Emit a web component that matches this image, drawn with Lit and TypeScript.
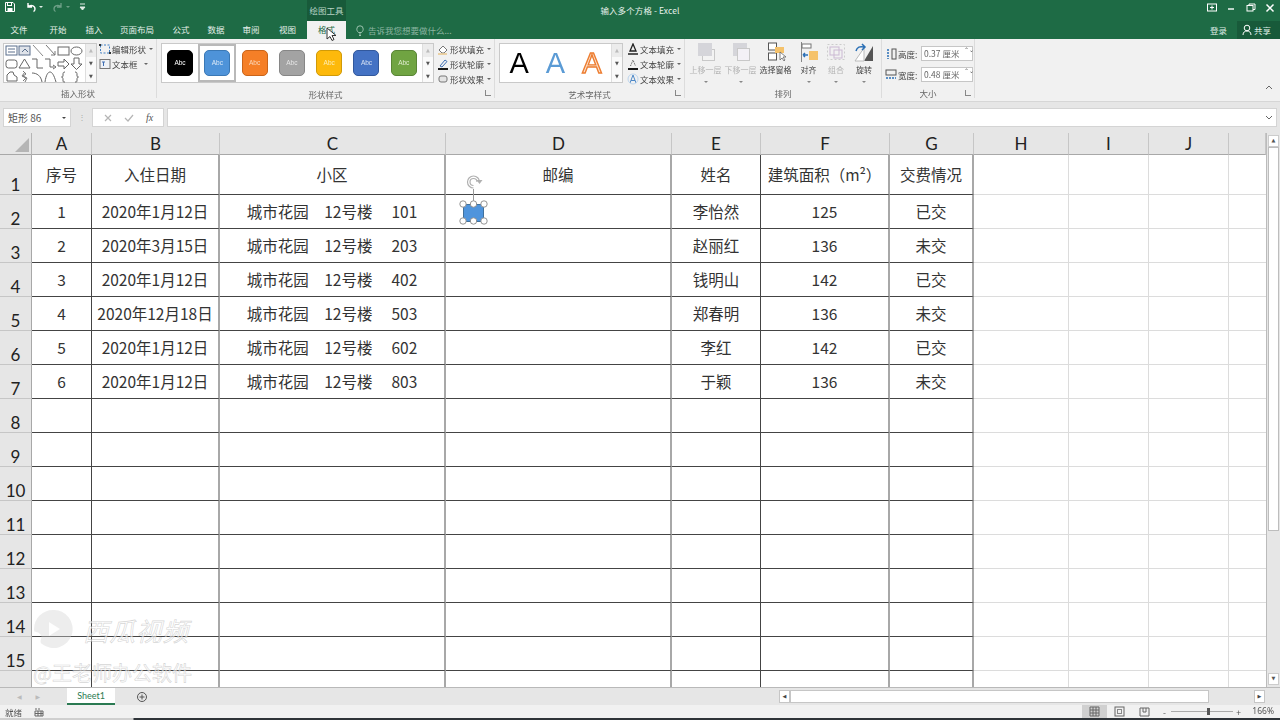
import { LitElement, css, html, svg } from 'lit';
import { customElement } from 'lit/decorators.js';

const TABS: [string, number][] = [
	['文件', 38], ['开始', 40], ['插入', 32], ['页面布局', 54], ['公式', 34],
	['数据', 36], ['审阅', 34], ['视图', 39],
];

const SWATCHES = [
	['#000000', '#000000', '#fff'], ['#4e93d9', '#3a78b5', '#dbe9f7'], ['#f57f27', '#c9641a', '#fbd9bd'],
	['#a3a3a3', '#868686', '#e6e6e6'], ['#fdb90b', '#d09a08', '#fdeeb5'], ['#4472c4', '#32589c', '#d7e1f3'],
	['#70a442', '#598535', '#dfeccf'],
];

const COLS = [
	{ name: 'A', w: 60, edge: 'dark' }, { name: 'B', w: 128, edge: 'gray' }, { name: 'C', w: 226, edge: 'gray' },
	{ name: 'D', w: 226, edge: 'gray' }, { name: 'E', w: 89, edge: 'dark' }, { name: 'F', w: 129, edge: 'gray' },
	{ name: 'G', w: 84, edge: 'gray' }, { name: 'H', w: 95, edge: 'light' }, { name: 'I', w: 80, edge: 'light' },
	{ name: 'J', w: 80, edge: 'light' }, { name: '', w: 37, edge: 'none' },
];

const ROWS = [
	['序号', '入住日期', '小区', '邮编', '姓名', '建筑面积（m²）', '交费情况'],
	['1', '2020年1月12日', '城市花园　12号楼　 101', '', '李怡然', '125', '已交'],
	['2', '2020年3月15日', '城市花园　12号楼　 203', '', '赵丽红', '136', '未交'],
	['3', '2020年1月12日', '城市花园　12号楼　 402', '', '钱明山', '142', '已交'],
	['4', '2020年12月18日', '城市花园　12号楼　 503', '', '郑春明', '136', '未交'],
	['5', '2020年1月12日', '城市花园　12号楼　 602', '', '李红', '142', '已交'],
	['6', '2020年1月12日', '城市花园　12号楼　 803', '', '于颖', '136', '未交'],
];

const ic = (w: number, h: number, body: unknown) =>
	html`<svg width=${w} height=${h} viewBox="0 0 ${w} ${h}" fill="none">${body}</svg>`;

// the little outlines in the insert-shape gallery, three rows of six
const SHAPES = [
	svg`<rect x="1" y="2" width="11" height="9" stroke="#5a6f8c"/><path d="M3 5h7M3 8h7" stroke="#5a6f8c"/>`,
	svg`<rect x="1" y="2" width="11" height="9" fill="#dfe3ea" stroke="#5a6f8c"/><path d="M4 8l3-3 3 3" stroke="#5a6f8c"/>`,
	svg`<path d="M2 1l10 11" stroke="#8a8a8a"/>`,
	svg`<path d="M2 1l9 10M11 7v4H7" stroke="#777"/>`,
	svg`<rect x="1" y="3" width="11" height="8" stroke="#666"/>`,
	svg`<ellipse cx="6.5" cy="7" rx="5.5" ry="4" stroke="#666"/>`,
	svg`<rect x="1" y="3" width="11" height="8" rx="2.5" stroke="#666"/>`,
	svg`<path d="M6.5 2L12 11H1z" stroke="#666"/>`,
	svg`<path d="M1 2h5v9h6" stroke="#666"/>`,
	svg`<path d="M1 2h5v8h4M9 8l3 2-3 2" stroke="#666"/>`,
	svg`<path d="M1 5h6V2l5 5-5 5V9H1z" stroke="#666"/>`,
	svg`<path d="M4 1h5v6h3l-5.500 5.500L1 7h3z" stroke="#666"/>`,
	svg`<path d="M2 11V5l3-3h3l1 3 3 2v4z" stroke="#666"/>`,
	svg`<path d="M5 1l3 3-3 2 4 2-2 4M7 2L4 6l4 2-3 3" stroke="#777"/>`,
	svg`<path d="M1 3c5 0 9 3 10 9" stroke="#666"/>`,
	svg`<path d="M1 12C2 5 4 2 6 2s4 3 6 10" stroke="#666"/>`,
	svg`<path d="M8 2C6 2 6 3 6 5S6 6.500 4.500 7C6 7.500 6 8 6 10s0 2 2 2" stroke="#666"/>`,
	svg`<path d="M5 2c2 0 2 1 2 3s0 1.500 1.500 2C7 7.500 7 8 7 10s0 2-2 2" stroke="#666"/>`,
];

@customElement('app-root')
export class AppRoot extends LitElement {

	static styles = css`
		:host {
			width: 1280px;
			height: 720px;
			overflow: hidden;
			position: relative;
			display: flex;
			flex-direction: column;
			font-family: "Noto Sans CJK SC", "Noto Sans", sans-serif;
			background: #f1f1f1;
			color: #444;
		}
		.titlebar { height: 39px; background: #1e6b45; color: #e4efe9; flex: none; }
		.toprow { height: 21px; display: grid; grid-template-columns: 1fr auto 1fr; }
		.left { display: flex; align-items: center; }
		.qat { width: 307px; display: flex; align-items: flex-start; gap: 9px; padding: 1px 0 0 4px; height: 21px; box-sizing: border-box; }
		.qat .faded { opacity: .35; }
		.qat .drop { display: flex; align-items: center; }
		.context { width: 39px; height: 21px; background: #185a3a; font-size: 8.5px; text-align: center; line-height: 21px; color: #b7d2c4; }
		.title { font-size: 8.5px; line-height: 20px; letter-spacing: .1px; color: #e6f0ea; }
		.winbtns { display: flex; justify-content: flex-end; align-items: flex-start; gap: 9.500px; padding: 3px 5px 0 0; }
		.tabrow { height: 18px; display: flex; align-items: stretch; font-size: 8.500px; }
		.tab { text-align: center; line-height: 16px; }
		.tab.on { width: 39px; background: #f1f1f1; color: #1e6b45; }
		.tell { margin-left: 10px; display: flex; align-items: center; gap: 4px; color: #8db5a1; font-size: 8.5px; }
		.account { margin-left: auto; display: flex; align-items: stretch; }
		.login { line-height: 18px; margin-right: 10px; color: #dfece5; }
		.share { width: 43px; background: #185a3a; display: flex; align-items: center; gap: 2px; padding-left: 5px; box-sizing: border-box; color: #dfece5; }

		.ribbon { height: 63px; flex: none; display: flex; background: #f1f1f1; border-bottom: 1px solid #d6d6d6; box-sizing: border-box; filter: blur(.3px); position: relative; }
		.group { position: relative; display: flex; flex-direction: column; border-right: 1px solid #dcdcdc; box-sizing: border-box; margin-bottom: 3px; }
		.gbody { flex: 1; display: flex; align-items: flex-start; padding-top: 4px; }
		.glabel { height: 14px; text-align: center; font-size: 8.5px; line-height: 18px; color: #666; }
		.launch { position: absolute; right: 3px; bottom: 2px; width: 5px; height: 5px; border-left: 1px solid #888; border-bottom: 1px solid #888; }
		.gallery { display: flex; background: #fff; border: 1px solid #c9c9c9; height: 40px; box-sizing: border-box; }
		.shapes { display: grid; grid-template-columns: repeat(6, 13px); grid-auto-rows: 13px; padding-left: 1px; width: 80px; }
		.spin { width: 10px; display: flex; flex-direction: column; background: #fafafa; border-left: 1px solid #dedede; color: #555; }
		.spin span { flex: 1; font-size: 5px; text-align: center; line-height: 13px; font-family: "DejaVu Sans", sans-serif; }
		.spin span:first-child { color: #bbb; background: #ececec; }
		.cmds { display: flex; flex-direction: column; font-size: 8.5px; height: 43px; margin-top: -1px; justify-content: space-between; color: #444; white-space: nowrap; }
		.cmds.two { height: 28px; }
		.cmd { display: flex; align-items: center; gap: 1px; height: 13px; }
		.caret { width: 0; height: 0; border: 2px solid transparent; border-top: 2.500px solid #666; border-bottom: 0; margin-left: 2px; }

		.styles { display: flex; align-items: center; width: 260px; padding-left: 5px; gap: 11.300px; box-sizing: border-box; }
		.sw { width: 26px; height: 26px; border-radius: 5px; border: 1px solid; box-sizing: border-box; font-size: 6.5px; font-family: "Liberation Sans", sans-serif; text-align: center; line-height: 24px; flex: none; }
		.selbox { flex: none; width: 38px; height: 38px; margin: 0 -6px; border: 2px solid #b9b9b9; box-sizing: border-box; background: #fff; display: flex; align-items: center; justify-content: center; }
		.wa { display: flex; width: 111px; align-items: center; justify-content: space-around; padding: 0 1px; box-sizing: border-box; }
		.wa span { font-family: "Liberation Sans", sans-serif; font-size: 29px; line-height: 38px; }
		.a1 { color: #000; }
		.a2 { color: #5b9bd5; }
		.a3 { color: #fbe3cf; -webkit-text-stroke: 1.4px #ed7d31; }

		.arrange { display: flex; padding-left: 4px; align-items: flex-start; }
		.big { width: 33px; display: flex; flex-direction: column; align-items: center; font-size: 8px; color: #444; white-space: nowrap; gap: 2px; flex: none; }
		.big.off { color: #b4b4b4; }
		.big .caret { margin: 4px 0 0; border-top-color: #888; }
		.big.narrow { width: 28px; }
		.big.pushed { margin-left: 2px; }
		.big.tucked { margin-left: -3px; }
		.sizer { font-size: 8.5px; display: flex; flex-direction: column; gap: 6px; padding: 7px 0 0 3px; white-space: nowrap; }
		.srow { display: flex; align-items: center; gap: 1px; height: 15px; }
		.srow .lbl { flex: none; width: 20px; }
		.num { flex: none; width: 52px; height: 15px; box-sizing: border-box; background: #fff; border: 1px solid #c6c6c6; padding-left: 2px; line-height: 13px; color: #666; position: relative; margin-left: 2px; font-size: 8.5px; }
		.num::after { content: '⌃⌄'; position: absolute; right: 3px; top: 0; font-size: 6px; line-height: 6px; width: 5px; color: #555; font-family: "DejaVu Sans", sans-serif; }
		.collapse { position: absolute; right: 7px; bottom: 6px; }

		.fbar { flex: none; height: 31px; background: #e6e6e6; padding: 6px 3px; box-sizing: border-box; display: flex; align-items: stretch; font-size: 10px; }
		.namebox { width: 68px; background: #fff; border: 1px solid #d4d4d4; box-sizing: border-box; display: flex; align-items: center; justify-content: space-between; padding: 0 4px; color: #555; }
		.dots { width: 21px; text-align: center; color: #aaa; font-size: 8px; line-height: 17px; }
		.fbtns { width: 72px; background: #fff; border: 1px solid #d4d4d4; box-sizing: border-box; display: flex; align-items: center; justify-content: space-around; padding: 0 4px; }
		.fx { font-family: "Liberation Serif", serif; font-style: italic; font-size: 10px; color: #555; }
		.finput { flex: 1; margin-left: 3px; background: #fff; border: 1px solid #d4d4d4; display: flex; align-items: center; justify-content: flex-end; padding-right: 3px; }

		.work { flex: none; height: 554px; display: flex; position: relative; overflow: hidden; }
		.sheet { width: 1266px; overflow: hidden; background: #fff; }
		.table { display: grid; grid-template-rows: 22px 40px repeat(15, 34px); color: #333; font-size: 15.5px; }
		.corner { background: #e6e6e6; border-right: 1px solid #b5b5b5; border-bottom: 1px solid #a8a8a8; box-sizing: border-box; position: relative; }
		.corner::after { content: ''; position: absolute; right: 2px; bottom: 2px; border: 7px solid transparent; border-right-color: #b5b5b5; border-bottom-color: #b5b5b5; }
		.ch { background: #e6e6e6; border-right: 1px solid #c6c6c6; border-bottom: 1px solid #a8a8a8; box-sizing: border-box; text-align: center; font: 17px/22px Lato, sans-serif; color: #222; }
		.rh { background: #e6e6e6; border-right: 1px solid #a8a8a8; border-bottom: 1px solid #c6c6c6; box-sizing: border-box; text-align: center; font: 17px/1 Lato, sans-serif; color: #222; display: flex; align-items: flex-end; justify-content: center; padding-bottom: 1px; }
		.c { box-sizing: border-box; text-align: center; border-bottom: 1px solid #444; border-right: 1px solid #444; line-height: 33px; white-space: nowrap; overflow: hidden; }
		.c.gray { border-right: 2px solid #a8a8a8; }
		.c.light, .c.none { border-bottom: 1px solid #dcdcdc; }
		.c.light { border-right: 1px solid #dcdcdc; }
		.c.none { border-right: 0; }
		.c.head { line-height: 39px; }

		.shape { position: absolute; left: 457px; top: 42px; pointer-events: none; }
		.mark { position: absolute; left: 33px; top: 477px; pointer-events: none; color: rgba(255,255,255,.6); -webkit-text-stroke: .6px rgba(170,170,170,.5); }
		.mark .row1 { display: flex; align-items: center; gap: 10px; padding-left: 1px; }
		.mark .logo { flex: none; }
		.mark .brand { font-size: 25.500px; font-style: italic; letter-spacing: 1px; line-height: 36px; }
		.mark .row2 { font-size: 20px; line-height: 22px; margin-top: 13px; white-space: nowrap; overflow: visible; }

		.vscroll { width: 14px; background: #e6e6e6; border-left: 1px solid #bbb; box-sizing: border-box; padding: 2px 1px; display: flex; flex-direction: column; }
		.vscroll .btn { height: 10px; background: #fff; border: 1px solid #ccc; font-size: 5px; text-align: center; line-height: 9px; color: #555; font-family: "DejaVu Sans", sans-serif; }
		.thumb { height: 384px; background: #fff; border: 1px solid #bdbdbd; box-sizing: border-box; }
		.vscroll .grow { flex: 1; }

		.tabbar { flex: none; height: 18px; background: #e6e6e6; border-top: 1px solid #b9b9b9; box-sizing: border-box; display: flex; align-items: stretch; font-size: 8px; color: #bbb; }
		.nav { width: 67px; display: flex; justify-content: center; gap: 14px; align-items: center; font-family: "DejaVu Sans", sans-serif; font-size: 6px; box-sizing: border-box; padding-right: 10px; }
		.sheet1 { width: 48px; background: #fff; color: #2b7a52; font: 9px/15px Lato, sans-serif; text-align: center; border-bottom: 2px solid #2b7a52; box-sizing: border-box; }
		.plus { margin-left: 21px; display: flex; align-items: center; }
		.hs { margin-left: auto; display: flex; width: 501px; align-items: center; padding-right: 15px; box-sizing: border-box; }
		.hb { width: 11px; height: 13px; background: #fff; border: 1px solid #c6c6c6; box-sizing: border-box; color: #444; font-size: 5px; line-height: 11px; text-align: center; font-family: "DejaVu Sans", sans-serif; }
		.hthumb { width: 419px; height: 13px; background: #fff; border: 1px solid #c6c6c6; box-sizing: border-box; }
		.hgap { flex: 1; }

		.status { flex: none; height: 13px; background: #f1f1f1; font-size: 8.5px; display: flex; align-items: center; color: #555; filter: blur(.2px); }
		.status .ready { padding-left: 5px; width: 34px; box-sizing: border-box; }
		.views { margin-left: auto; display: flex; align-items: stretch; height: 13px; }
		.view { width: 25px; display: flex; justify-content: center; align-items: center; }
		.view.on { background: #d0d0d0; }
		.zoombar { width: 84px; margin-left: 3px; padding: 0 3px; box-sizing: border-box; position: relative; display: flex; align-items: center; justify-content: space-between; color: #555; }
		.zoombar::before { content: ''; position: absolute; left: 11px; right: 11px; top: 6px; height: 1px; background: #aaa; }
		.zoombar i { position: absolute; left: 47px; top: 3px; width: 3px; height: 7px; background: #555; }
		.pct { width: 36px; text-align: right; padding-right: 6px; box-sizing: border-box; font-family: "Noto Sans", sans-serif; font-size: 8.5px; }
		.edge { flex: none; height: 2px; background: linear-gradient(90deg, #cfcfcf 0, #cfcfcf 133px, #2e3338 134px); }
		.cursor { position: absolute; left: 326px; top: 27px; }
	`

	private sheetCells() {
		const out = [];
		for (let r = 0; r < 16; r++) {
			out.push(html`<div class="rh">${r < 15 ? r + 1 : ''}</div>`);
			COLS.forEach((col, i) => {
				const text = ROWS[r] ? ROWS[r][i] : '';
				const cls = `c ${col.edge}${r === 0 ? ' head' : ''}`;
				out.push(html`<div class=${cls}>${text ?? ''}</div>`);
			});
		}
		return out;
	}

	render() {
		const cols = `32px ${COLS.map((c) => `${c.w}px`).join(' ')}`;
		return html`
			<div class="titlebar">
				<div class="toprow">
					<div class="left">
						<div class="qat">
							${ic(12, 12, svg`<path d="M1.500 1.500h7.500l1.500 1.500v7.500h-9z" stroke="#fff"/><rect x="3.500" y="1.500" width="4" height="3" stroke="#fff"/><rect x="3.500" y="7" width="5" height="3.500" fill="#fff"/>`)}
							<span class="drop">${ic(12, 12, svg`<path d="M3 2v4h4M3 6c2-2.500 7-2 7 2 0 1-.5 2-1.500 2.500" stroke="#fff" stroke-width="1.400"/>`)}<span class="caret" style="border-top-color:#dfece5"></span></span>
							<span class="drop faded">${ic(12, 12, svg`<path d="M9 2v4H5M9 6C7 3.500 2 4 2 8c0 1 .5 2 1.500 2.500" stroke="#fff" stroke-width="1.300"/>`)}<span class="caret" style="border-top-color:#fff"></span></span>
							${ic(7, 10, svg`<path d="M1 3h5M1 6l2.500 3L6 6z" stroke="#dfece5" fill="#dfece5"/>`)}
						</div>
						<div class="context">绘图工具</div>
					</div>
					<div class="title">输入多个方格 - Excel</div>
					<div class="winbtns">
						${ic(11, 9, svg`<rect x=".5" y="1" width="9" height="7" stroke="#fff"/><path d="M5 2.500v4M3 4.500h4" stroke="#fff"/>`)}
						${ic(9, 9, svg`<path d="M1 6h6" stroke="#fff" stroke-width="1.400"/>`)}
						${ic(10, 9, svg`<rect x="1" y="2.500" width="6" height="5.500" stroke="#fff"/><path d="M3 2.500V1h6v5.500H7" stroke="#fff"/>`)}
						${ic(10, 10, svg`<path d="M1.500 1.500l7 7M8.500 1.500l-7 7" stroke="#fff" stroke-width="1.500"/>`)}
					</div>
				</div>
				<div class="tabrow">
					${TABS.map(([t, w]) => html`<div class="tab" style="width:${w}px">${t}</div>`)}
					<div class="tab on">格式</div>
					<div class="tell">
						${ic(8, 11, svg`<path d="M2.500 7.500C1 6 .8 5 .8 4a3.200 3.200 0 0 1 6.400 0c0 1-.2 2-1.700 3.500zM3 9h2M3 10.500h2" stroke="#a9cbb9" stroke-width=".9"/>`)}
						<span>告诉我您想要做什么...</span>
					</div>
					<div class="account">
						<span class="login">登录</span>
						<span class="share">${ic(10, 12, svg`<circle cx="5" cy="4" r="2.800" stroke="#fff"/><path d="M1 11c0-3 2-4 4-4s4 1 4 4" stroke="#fff"/>`)}共享</span>
					</div>
				</div>
			</div>

			<div class="ribbon">
				<div class="group" style="width:157px">
					<div class="gbody" style="padding-left:3px;gap:2px">
						<div class="gallery">
							<div class="shapes">${SHAPES.map((s) => ic(13, 13, s))}</div>
							<div class="spin"><span>▲</span><span>▼</span><span>▼</span></div>
						</div>
						<div class="cmds two">
							<div class="cmd">
								${ic(12, 12, svg`<rect x="1.500" y="2" width="9" height="8" stroke="#3f7fc4" stroke-dasharray="2 1.500"/><rect x="0" y="1" width="2" height="2" fill="#333"/><rect x="10" y="9" width="2" height="2" fill="#333"/>`)}
								<span>编辑形状</span><span class="caret"></span>
							</div>
							<div class="cmd">
								${ic(12, 12, svg`<rect x="1" y="1.500" width="10" height="9" stroke="#777" fill="#eef1f6"/><path d="M3 4h3M4.500 4v4" stroke="#3f6fb4"/>`)}
								<span>文本框</span><span class="caret" style="margin-left:5px"></span>
							</div>
						</div>
					</div>
					<div class="glabel">插入形状</div>
				</div>

				<div class="group" style="width:338px">
					<div class="gbody" style="padding-left:4px;gap:3px">
						<div class="gallery">
							<div class="styles">
								${SWATCHES.map((s, i) => {
									const sw = html`<div class="sw" style="background:${s[0]};border-color:${s[1]};color:${s[2]}">Abc</div>`;
									return i === 1 ? html`<div class="selbox">${sw}</div>` : sw;
								})}
							</div>
							<div class="spin"><span>▲</span><span>▼</span><span>▼</span></div>
						</div>
						<div class="cmds">
							<div class="cmd">${ic(12, 12, svg`<path d="M2 7l4-4 4 4-3 3H5z" stroke="#777" fill="#fff"/><path d="M1 11h9" stroke="#e8c68a" stroke-width="1.500"/>`)}<span>形状填充</span><span class="caret"></span></div>
							<div class="cmd">${ic(12, 12, svg`<path d="M3 8l5-6 2 1.500L5 9z" stroke="#3f6fb4"/><path d="M1 11h10" stroke="#000" stroke-width="1.800"/>`)}<span>形状轮廓</span><span class="caret"></span></div>
							<div class="cmd">${ic(12, 12, svg`<rect x="2" y="3" width="8" height="6" rx="2" stroke="#777" fill="#e4e4e4"/>`)}<span>形状效果</span><span class="caret"></span></div>
						</div>
					</div>
					<div class="glabel">形状样式</div>
					<span class="launch"></span>
				</div>

				<div class="group" style="width:190px">
					<div class="gbody" style="padding-left:4px;gap:4px">
						<div class="gallery">
							<div class="wa"><span class="a1">A</span><span class="a2">A</span><span class="a3">A</span></div>
							<div class="spin"><span>▲</span><span>▼</span><span>▼</span></div>
						</div>
						<div class="cmds">
							<div class="cmd">${ic(12, 12, svg`<path d="M3 8l3-7 3 7zM1 11h10" stroke="#222" stroke-width="1.300"/>`)}<span>文本填充</span><span class="caret"></span></div>
							<div class="cmd">${ic(12, 12, svg`<path d="M3.500 8l2.500-6 2.500 6" stroke="#666" stroke-dasharray="1.500 1"/><path d="M1 11h10" stroke="#000" stroke-width="1.800"/>`)}<span>文本轮廓</span><span class="caret"></span></div>
							<div class="cmd">${ic(12, 12, svg`<path d="M3 10l3-8 3 8M4 7.500h4" stroke="#4d88c7"/><circle cx="6" cy="6" r="5" stroke="#bcd5ee"/>`)}<span>文本效果</span><span class="caret"></span></div>
						</div>
					</div>
					<div class="glabel">艺术字样式</div>
					<span class="launch"></span>
				</div>

				<div class="group" style="width:197px">
					<div class="arrange gbody" style="padding-top:3px">
						<div class="big off">${ic(22, 20, svg`<rect x="7.500" y="7.500" width="12" height="11" fill="#f3f3f3" stroke="#c8c8c8"/><rect x="3" y="1" width="14" height="13" fill="#d5d5da"/>`)}<span>上移一层</span><span class="caret"></span></div>
						<div class="big off pushed">${ic(22, 20, svg`<rect x="3" y="1" width="14" height="13" fill="#d5d5da"/><rect x="7.500" y="6.500" width="12" height="12" fill="#f3f1f6" stroke="#c8c8c8"/>`)}<span>下移一层</span><span class="caret"></span></div>
						<div class="big pushed">${ic(22, 20, svg`<rect x="3.500" y="1" width="8" height="7" fill="#fff" stroke="#555"/><rect x="3.500" y="11" width="8" height="7" fill="#fff" stroke="#555"/><rect x="10" y="5" width="9" height="6" fill="#f5c26b"/><path d="M15 10v8l2-2 2 3 1-1-2-3h3z" fill="#fff" stroke="#666" stroke-width=".8"/>`)}<span>选择窗格</span></div>
						<div class="big">${ic(22, 20, svg`<path d="M3.500 0v20" stroke="#888"/><rect x="4" y="2" width="9" height="4" fill="#fff" stroke="#777"/><rect x="11" y="9" width="9" height="9" fill="#f5c26b"/><path d="M5 13h5M5 13l2-2M5 13l2 2" stroke="#2a6fb5" stroke-width="1.500"/>`)}<span>对齐</span><span class="caret"></span></div>
						<div class="big off narrow tucked">${ic(22, 20, svg`<rect x="2.500" y="2.500" width="17" height="15" stroke="#ccc" stroke-dasharray="2 2"/><rect x="5" y="5" width="9" height="8" stroke="#cbb9d3"/><rect x="9" y="8" width="8" height="8" stroke="#cbb9d3"/>`)}<span>组合</span><span class="caret"></span></div>
						<div class="big narrow">${ic(22, 20, svg`<path d="M11 19l9 0V4z" fill="#555"/><path d="M2 19h9V6z" fill="#fff" stroke="#bbb"/><path d="M3 9c1-4 4-5 8-4M9 2l3 3-3 3" stroke="#2a6fb5" stroke-width="1.500"/>`)}<span>旋转</span><span class="caret"></span></div>
					</div>
					<div class="glabel">排列</div>
				</div>

				<div class="group" style="width:93px">
					<div class="sizer gbody">
						<div class="srow">${ic(12, 12, svg`<rect x="7" y="1" width="4" height="10" stroke="#555"/><path d="M3 1v10" stroke="#2a6fb5" stroke-width="1.500" stroke-dasharray="2 1"/>`)}<span class="lbl">高度:</span><span class="num">0.37 厘米</span></div>
						<div class="srow">${ic(12, 12, svg`<rect x="1" y="1" width="10" height="5" stroke="#555"/><path d="M1 9h10" stroke="#2a6fb5" stroke-width="1.500" stroke-dasharray="2 1"/>`)}<span class="lbl">宽度:</span><span class="num">0.48 厘米</span></div>
					</div>
					<div class="glabel">大小</div>
					<span class="launch"></span>
				</div>
				<span class="collapse">${ic(8, 5, svg`<path d="M1 4l3-3 3 3" stroke="#666"/>`)}</span>
			</div>

			<div class="fbar">
				<div class="namebox"><span>矩形 86</span><span class="caret" style="border-top-color:#444"></span></div>
				<div class="dots">⋮</div>
				<div class="fbtns">
					${ic(10, 10, svg`<path d="M2 2l6 6M8 2l-6 6" stroke="#b5b5b5" stroke-width="1.200"/>`)}
					${ic(10, 10, svg`<path d="M1 5l3 3 5-6" stroke="#b5b5b5" stroke-width="1.200"/>`)}
					<span class="fx">fx</span>
				</div>
				<div class="finput">${ic(8, 5, svg`<path d="M1 1l3 3 3-3" stroke="#666"/>`)}</div>
			</div>

			<div class="work">
				<div class="sheet">
					<div class="table" style="grid-template-columns:${cols}">
						<div class="corner"></div>
						${COLS.map((c) => html`<div class="ch">${c.name}</div>`)}
						${this.sheetCells()}
					</div>
				</div>
				<div class="vscroll">
					<div class="btn">▲</div>
					<div class="thumb"></div>
					<div class="grow"></div>
					<div class="btn">▼</div>
				</div>
				<svg class="shape" width="34" height="56" viewBox="0 0 34 56" fill="none">
					<path d="M16.500 14V29" stroke="#999"/>
					<path d="M22.500 7A6 6 0 1 0 16.500 13M20 7A3.500 3.500 0 1 0 16.500 10.500" stroke="#b0b0b0" stroke-width="1.200"/>
					<path d="M19.500 5h6l-3 4z" fill="#b0b0b0"/>
					<rect x="6.500" y="29.500" width="20" height="17" fill="#4f94dc" stroke="#41719c"/>
					${[[6, 29], [16.5, 29], [27, 29], [6, 46], [16.5, 46], [27, 46]].map(([x, y]) => svg`<circle cx=${x} cy=${y} r="3.200" fill="#fff" stroke="#888" stroke-width=".9"/>`)}
				</svg>
				<div class="mark">
					<div class="row1">
						<svg class="logo" width="39" height="39" viewBox="0 0 39 39"><path d="M19 0a19 19 0 1 1-11 34C4 31 10 28 6 24 2 20 0 24 0 19A19 19 0 0 1 19 0z" fill="rgba(210,210,210,.4)"/><path d="M15 12l11 7-11 7z" fill="rgba(255,255,255,.9)"/></svg>
						<span class="brand">西瓜视频</span>
					</div>
					<div class="row2">@王老师办公软件</div>
				</div>
			</div>

			<div class="tabbar">
				<div class="nav"><span>◀</span><span>▶</span></div>
				<div class="sheet1">Sheet1</div>
				<div class="plus">${ic(12, 12, svg`<circle cx="6" cy="6" r="4.500" stroke="#555"/><path d="M6 3.500v5M3.500 6h5" stroke="#555"/>`)}</div>
				<div class="hs">
					<div class="hb">◀</div>
					<div class="hthumb"></div>
					<div class="hgap"></div>
					<div class="hb">▶</div>
				</div>
			</div>

			<div class="status">
				<div class="ready">就绪</div>
				${ic(10, 10, svg`<path d="M1 2h2M1 4h8v5H1zM4 4v5M7 4v5M1 6.500h8" stroke="#666"/><path d="M4 2h2" stroke="#666"/>`)}
				<div class="views">
					<div class="view on">${ic(11, 11, svg`<path d="M1 1h9v9H1zM4 1v9M7 1v9M1 4h9M1 7h9" stroke="#666"/>`)}</div>
					<div class="view">${ic(11, 11, svg`<rect x="1" y="1" width="9" height="9" stroke="#666"/><rect x="3.500" y="3.500" width="4" height="4" stroke="#888"/>`)}</div>
					<div class="view">${ic(11, 11, svg`<path d="M1 2h9v8H1zM4 2v4h3V2" stroke="#666"/>`)}</div>
					<div class="zoombar"><span>-</span><i></i><span>+</span></div>
					<div class="pct">166%</div>
				</div>
			</div>
			<div class="edge"></div>

			<svg class="cursor" width="11" height="15" viewBox="0 0 11 15"><path d="M1 1v11l3-2.500 2 4 2-1-2-4h4z" fill="#fff" stroke="#333"/></svg>
		`
	}

}

declare global {
	interface HTMLElementTagNameMap {
		'app-root': AppRoot
	}
}
